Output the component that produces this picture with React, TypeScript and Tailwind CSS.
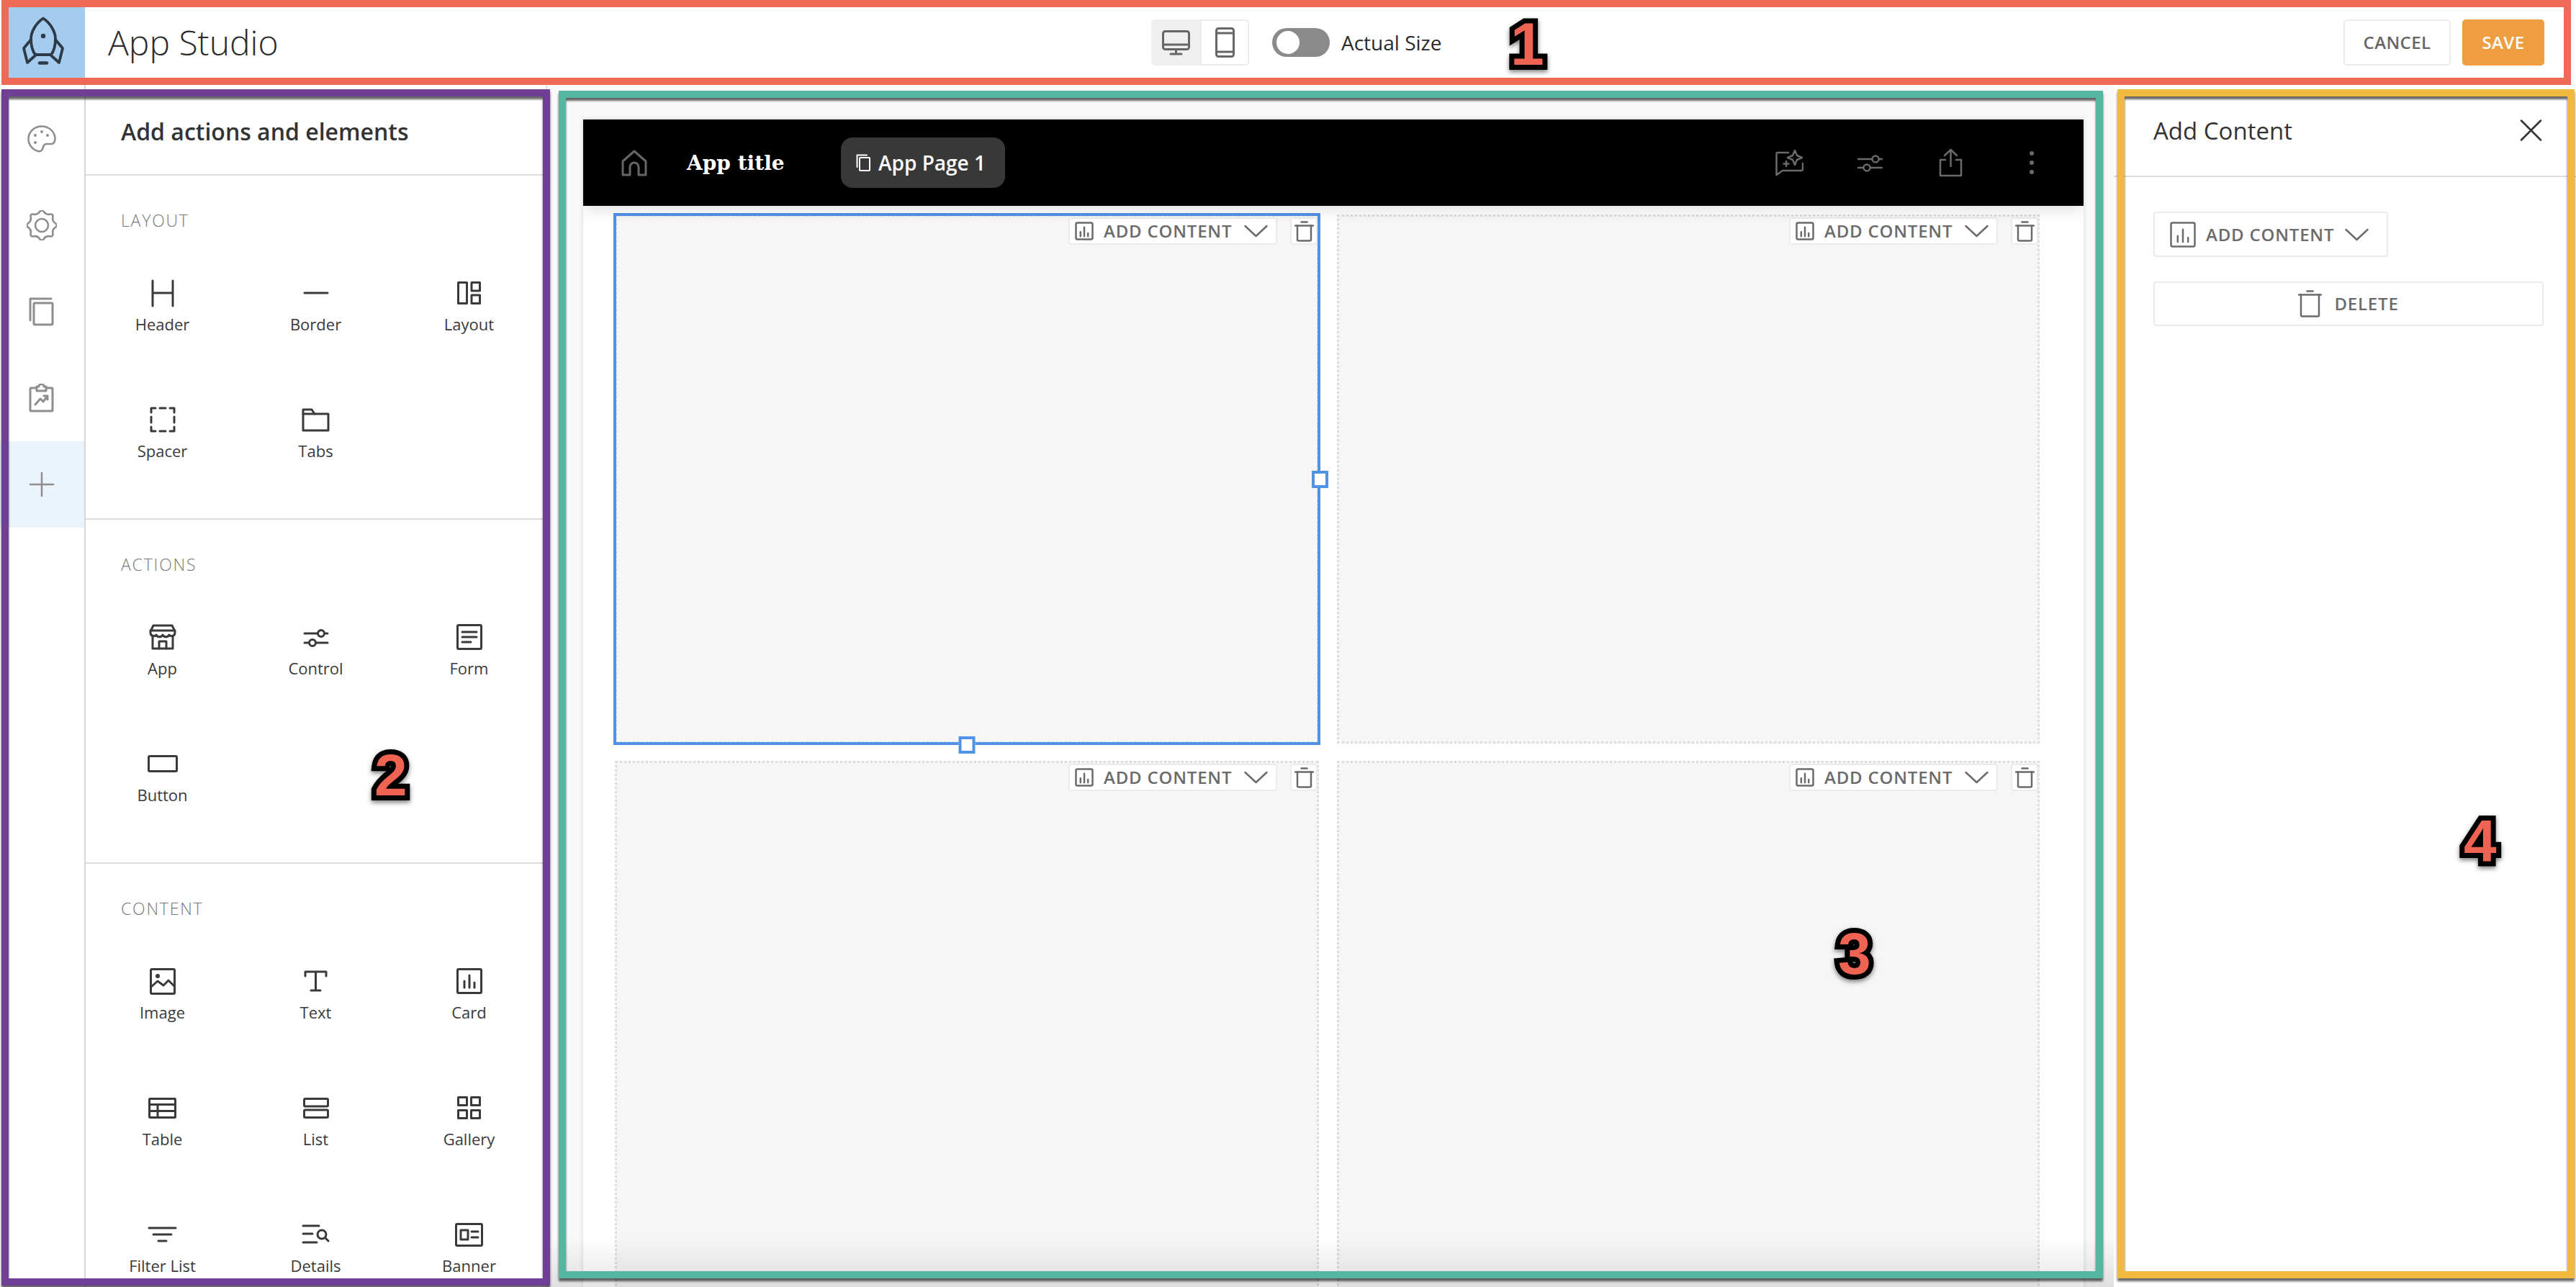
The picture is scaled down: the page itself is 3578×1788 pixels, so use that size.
import React from "react";

const Ico = ({ w, h, sw = 3, children, className = "" }: { w: number; h: number; sw?: number; children: React.ReactNode; className?: string }) => (
  <svg width={w} height={h} viewBox={`0 0 ${w} ${h}`} fill="none" stroke="currentColor" strokeWidth={sw} strokeLinecap="round" strokeLinejoin="round" className={`shrink-0 ${className}`}>
    {children}
  </svg>
);

const Rocket = () => (
  <Ico w={60} h={70} sw={3.8} className="text-[#2e3a46]">
    <path d="M30 3.5C20 10 13 22 13 32C13 42 16 50 19 54H41C44 50 47 42 47 32C47 22 40 10 30 3.5Z" />
    <path d="M13 33L3 45L8 65L19 55" />
    <path d="M47 33L57 45L52 65L41 55" />
    <circle cx="30" cy="28" r="3.2" fill="currentColor" stroke="none" />
    <path d="M25 65.5H35" strokeWidth={4.5} />
  </Ico>
);

// eight lobes, smoothed through the midpoints of an alternating outer/inner ring
const gearPath = (() => {
  const pts = Array.from({ length: 16 }, (_, i) => {
    const a = (i * Math.PI) / 8 - Math.PI / 2;
    const r = i % 2 === 0 ? 23 : 15.5;
    return [21 + r * Math.cos(a), 21 + r * Math.sin(a)];
  });
  const mid = (a: number[], b: number[]) => [(a[0] + b[0]) / 2, (a[1] + b[1]) / 2];
  const start = mid(pts[15], pts[0]);
  let d = `M${start[0].toFixed(2)} ${start[1].toFixed(2)}`;
  pts.forEach((p, i) => {
    const m = mid(p, pts[(i + 1) % 16]);
    d += `Q${p[0].toFixed(2)} ${p[1].toFixed(2)} ${m[0].toFixed(2)} ${m[1].toFixed(2)}`;
  });
  return d + "Z";
})();

const ChartBox = ({ s = 26 }: { s?: number }) => (
  <Ico w={s} h={s} sw={2.5}>
    <rect x="1.5" y="1.5" width={s - 3} height={s - 3} rx="2" />
    <path d={`M${s * 0.3} ${s * 0.55}V${s * 0.78}M${s * 0.5} ${s * 0.3}V${s * 0.78}M${s * 0.7} ${s * 0.62}V${s * 0.78}`} />
  </Ico>
);

const Chevron = () => (
  <Ico w={33} h={18} sw={2.5}>
    <path d="M1.5 2L16.5 16L31.5 2" />
  </Ico>
);

const Trash = ({ w = 27, h = 29 }: { w?: number; h?: number }) => (
  <Ico w={w} h={h} sw={2.5}>
    <path d={`M${w / 2 - 4} 1.5H${w / 2 + 4}`} />
    <path d={`M1 6.5H${w - 1}`} />
    <path d={`M4 6.5V${h - 3}Q4 ${h - 1.5} 6 ${h - 1.5}H${w - 6}Q${w - 4} ${h - 1.5} ${w - 4} ${h - 3}V6.5`} />
  </Ico>
);

const icons: Record<string, React.ReactNode> = {
  Header: (
    <Ico w={32} h={39}>
      <path d="M2 2V37M30 2V37M2 19H30" />
    </Ico>
  ),
  Border: (
    <Ico w={36} h={4}>
      <path d="M2 2H34" />
    </Ico>
  ),
  Layout: (
    <Ico w={33} h={32}>
      <rect x="1.5" y="1.5" width="12" height="29" />
      <rect x="20" y="1.5" width="11.5" height="11.5" />
      <rect x="20" y="19" width="11.5" height="11.5" />
    </Ico>
  ),
  Spacer: (
    <Ico w={36} h={36}>
      <path d="M2 8V2H8M14 2H22M28 2H34V8M34 14V22M34 28V34H28M22 34H14M8 34H2V28M2 22V14" />
    </Ico>
  ),
  Tabs: (
    <Ico w={39} h={33}>
      <path d="M2 2H14L18 8H37V31H2Z" />
      <path d="M2 8H18" />
    </Ico>
  ),
  App: (
    <Ico w={38} h={36}>
      <path d="M5 16V34H33V16" />
      <path d="M6 2H32L36 10V12A4.5 4.5 0 0 1 28 15A5 5 0 0 1 19 15A5 5 0 0 1 10 15A4.5 4.5 0 0 1 2 12V10Z" />
      <path d="M2 9H36" />
      <path d="M14 34V24H24V34" />
    </Ico>
  ),
  Control: (
    <Ico w={36} h={27}>
      <path d="M2 8H20M30 8H34M2 21H8M18 21H34" />
      <circle cx="25" cy="8" r="4.5" />
      <circle cx="13" cy="21" r="4.5" />
    </Ico>
  ),
  Form: (
    <Ico w={36} h={36}>
      <rect x="1.5" y="1.5" width="33" height="33" rx="1.5" />
      <path d="M8 11H28M8 18H28M8 25H20" />
    </Ico>
  ),
  Button: (
    <Ico w={42} h={24}>
      <rect x="1.5" y="1.5" width="39" height="21" rx="1.5" />
    </Ico>
  ),
  Image: (
    <Ico w={36} h={37}>
      <rect x="1.5" y="1.5" width="33" height="34" rx="1.5" />
      <circle cx="11" cy="11" r="1.5" />
      <path d="M2 26L11 18L19 24L26 17L34 25" />
    </Ico>
  ),
  Text: (
    <Ico w={33} h={30}>
      <path d="M2 8V2H31V8M16.5 2V28M10 28H23" />
    </Ico>
  ),
  Card: (
    <Ico w={36} h={36}>
      <rect x="1.5" y="1.5" width="33" height="33" rx="1.5" />
      <path d="M11 18V27M18 10V27M25 20V27" />
    </Ico>
  ),
  Table: (
    <Ico w={39} h={29}>
      <rect x="1.5" y="1.5" width="36" height="26" rx="1" />
      <path d="M2 9.5H37M2 18.5H37M13 9.5V27" />
    </Ico>
  ),
  List: (
    <Ico w={36} h={29}>
      <rect x="1.5" y="1.5" width="33" height="10.5" rx="1.5" />
      <rect x="1.5" y="17" width="33" height="10.5" rx="1.5" />
    </Ico>
  ),
  Gallery: (
    <Ico w={33} h={32}>
      <rect x="1.5" y="1.5" width="12" height="11" />
      <rect x="19.5" y="1.5" width="12" height="11" />
      <rect x="1.5" y="19.5" width="12" height="11" />
      <rect x="19.5" y="19.5" width="12" height="11" />
    </Ico>
  ),
  "Filter List": (
    <Ico w={41} h={22}>
      <path d="M2 2H39M8 11H33M15 20H26" />
    </Ico>
  ),
  Details: (
    <Ico w={39} h={28}>
      <path d="M2 2H24M2 13H15M2 25H21" />
      <circle cx="28" cy="14" r="6" />
      <path d="M32.5 18.5L37 23" />
    </Ico>
  ),
  Banner: (
    <Ico w={39} h={33}>
      <rect x="1.5" y="1.5" width="36" height="30" rx="1.5" />
      <rect x="8" y="10" width="10" height="13" />
      <path d="M23 12H32M23 20H32" />
    </Ico>
  ),
};

const sections = [
  { title: "LAYOUT", items: ["Header", "Border", "Layout", "Spacer", "Tabs"] },
  { title: "ACTIONS", items: ["App", "Control", "Form", "Button"] },
  { title: "CONTENT", items: ["Image", "Text", "Card", "Table", "List", "Gallery", "Filter List", "Details", "Banner"] },
];

const Section = ({ title, items }: { title: string; items: string[] }) => (
  <div className="h-[478px] shrink-0 border-b-2 border-[#dcdcdc] last:h-auto last:border-b-0">
    <div className="pl-[49px] pt-[47px] text-[23px] leading-[30px] tracking-[1.8px] font-light text-[#777]">{title}</div>
    <div className="mt-[62px] grid grid-cols-3 auto-rows-[176px]">
      {items.map((item) => (
        <div key={item} className="flex flex-col items-center text-[#3a3a3a]">
          <div className="flex h-[48px] w-[48px] items-center justify-center">{icons[item]}</div>
          <span className="mt-[4px] text-[22px] leading-[30px]">{item}</span>
        </div>
      ))}
    </div>
  </div>
);

const Rail = () => (
  <div className="flex w-[119px] shrink-0 flex-col border-r-2 border-[#d8d8d8] pt-[15px] text-[#8e8e8e]">
    <div className="flex h-[120px] items-center justify-center pr-[2px]">
      <Ico w={40} h={38} sw={2.6}>
        <path d="M20 1.5C30 1.5 38 9 38.5 18C38.5 23 37 26 33 26H27C24 26 22.5 28 22 30C21.5 34 19 37 15 36C7 34 1.5 27 1.5 19C1.5 9 10 1.5 20 1.5Z" />
        <g fill="currentColor" stroke="none">
          <circle cx="11" cy="14" r="2" />
          <circle cx="20" cy="9" r="2" />
          <circle cx="28" cy="14" r="2" />
          <circle cx="11" cy="24" r="2" />
        </g>
      </Ico>
    </div>
    <div className="flex h-[120px] items-center justify-center pr-[2px]">
      <Ico w={42} h={42} sw={2.6}>
        <path d={gearPath} />
        <circle cx="21" cy="21" r="9" />
      </Ico>
    </div>
    <div className="flex h-[120px] items-center justify-center pr-[2px]">
      <Ico w={35} h={40}>
        <path d="M2 32V2H31" />
        <rect x="7" y="8" width="26" height="30" rx="1.5" />
      </Ico>
    </div>
    <div className="flex h-[120px] items-center justify-center pr-[2px]">
      <Ico w={35} h={40}>
        <path d="M11 6H3Q2 6 2 7V37Q2 38 3 38H32Q33 38 33 37V7Q33 6 32 6H24" />
        <path d="M11 10V4H14A3.5 3.5 0 0 1 21 4H24V10Z" />
        <path d="M9 29L16 21L20 25L26 17M21 17H26V22" />
      </Ico>
    </div>
    <div className="flex h-[120px] items-center justify-center bg-[#ebf3fb] pr-[2px]">
      <Ico w={36} h={36} sw={2.5}>
        <path d="M18 2V34M2 18H34" />
      </Ico>
    </div>
  </div>
);

const Cell = ({ selected = false }: { selected?: boolean }) => (
  <div className="relative h-[735px] border-[3px] border-dotted border-[#dcdcdc] bg-[#f6f6f6]">
    {selected && (
      <>
        <div className="absolute -inset-[5px] border-4 border-[#4f92e6]" />
        <div className="absolute right-[-16px] top-1/2 h-[24px] w-[23px] -translate-y-1/2 border-4 border-[#4f92e6] bg-white" />
        <div className="absolute bottom-[-17px] left-1/2 h-[24px] w-[23px] -translate-x-1/2 border-4 border-[#4f92e6] bg-white" />
      </>
    )}
    <div className="absolute right-[-1px] top-[1px] flex items-start gap-[18px] text-[#6b6b6b]">
      <div className="flex h-[38px] w-[290px] items-center rounded-[4px] border-2 border-[#ebebeb] bg-white pl-[7px]">
        <ChartBox />
        <span className="ml-[14px] text-[24px] font-semibold leading-none tracking-[0.8px]">ADD CONTENT</span>
        <span className="ml-[17px]">
          <Chevron />
        </span>
      </div>
      <div className="flex h-[38px] w-[38px] items-center justify-center rounded-[4px] border-2 border-[#ebebeb] bg-white">
        <Trash />
      </div>
    </div>
  </div>
);

const Num = ({ className, children }: { className: string; children: string }) => (
  <span
    className={`absolute font-['Liberation_Sans',sans-serif] font-bold leading-none text-[#ee6352] [-webkit-text-stroke:14px_#000] [paint-order:stroke_fill] drop-shadow-[0_3px_3px_rgba(0,0,0,0.5)] ${className}`}
  >
    {children}
  </span>
);

const App = () => {
  return (
    <div className="relative flex h-[1788px] w-[3578px] flex-col overflow-hidden bg-white font-['Open_Sans',sans-serif]">
      <header className="flex h-[118px] shrink-0 items-center pb-[10px] pl-[12px] pr-[44px] pt-[10px]">
        <div className="flex h-[98px] w-[106px] items-center justify-center bg-[#a3ccee] pb-[4px] pr-[10px]">
          <Rocket />
        </div>
        <h1 className="ml-[32px] w-[1449px] text-[48px] font-light leading-none text-[#2b2b2b]">App Studio</h1>
        <div className="flex h-[64px] w-[136px] text-[#666]">
          <div className="flex w-[68px] items-center justify-center rounded-l-[5px] bg-[#efefef]">
            <Ico w={39} h={35}>
              <rect x="1.5" y="1.5" width="36" height="25" rx="3" />
              <path d="M2 20H37M19.5 27V33M12 33H27" />
            </Ico>
          </div>
          <div className="flex w-[68px] items-center justify-center rounded-r-[5px] border-2 border-[#ececec]">
            <Ico w={27} h={42}>
              <rect x="1.5" y="1.5" width="24" height="39" rx="3" />
              <path d="M2 8H25M2 34H25" />
            </Ico>
          </div>
        </div>
        <div className="ml-[32px] flex h-[40px] w-[80px] items-center rounded-full bg-[#8a8a8a] pl-[6px]">
          <div className="h-[32px] w-[32px] rounded-full bg-white" />
        </div>
        <span className="ml-[16px] text-[28px] leading-none text-[#2b2b2b]">Actual Size</span>
        <div className="ml-auto flex h-[64px] gap-[16px] text-[24px] font-semibold tracking-[0.4px]">
          <button className="w-[149px] rounded-[5px] border-2 border-[#ececec] text-[#666]">CANCEL</button>
          <button className="w-[114px] rounded-[5px] bg-[#ee9d41] text-white">SAVE</button>
        </div>
      </header>

      <main className="flex min-h-0 flex-1">
        <aside className="flex w-[760px] shrink-0 border-r-2 border-[#e2e2e2]">
          <Rail />
          <div className="flex min-w-0 flex-1 flex-col overflow-hidden">
            <div className="flex h-[126px] shrink-0 items-center border-b-2 border-[#dcdcdc] pl-[49px] pt-[6px] text-[32px] font-semibold leading-none text-[#333]">
              Add actions and elements
            </div>
            {sections.map((s) => (
              <Section key={s.title} title={s.title} items={s.items} />
            ))}
          </div>
        </aside>

        <section className="relative flex min-w-0 flex-1 flex-col overflow-hidden bg-[#f9f9f9] pl-[50px] pr-[42px] pt-[48px]">
          <div className="relative flex-1 overflow-hidden bg-white shadow-[0_0_6px_rgba(0,0,0,0.15)]">
            <div className="relative z-10 flex h-[120px] items-center bg-black pl-[53px] pr-[69px] shadow-[0_6px_20px_rgba(0,0,0,0.12)]">
              <Ico w={36} h={37} className="text-[#666]">
                <path d="M2 16L18 2L34 16V35H24V24A6 6 0 0 0 12 24V35H2Z" />
              </Ico>
              <span className="ml-[55px] w-[133px] whitespace-nowrap pt-[2px] font-['DejaVu_Serif',serif] text-[28px] font-bold leading-none text-white">App title</span>
              <div className="ml-[81px] flex h-[70px] w-[228px] items-center rounded-[16px] bg-[#383838] pl-[21px]">
                <Ico w={20} h={24} sw={2} className="text-white">
                  <path d="M1.5 18V1.5H15" />
                  <rect x="5" y="5" width="14" height="18" rx="1" />
                </Ico>
                <span className="ml-[11px] text-[28px] font-semibold leading-none text-white">App Page 1</span>
              </div>
              <div className="ml-auto flex items-center text-[#6a6a6a]">
                <Ico w={39} h={38} sw={2.5}>
                  <path d="M18 5H3Q1.5 5 1.5 6.5V36L10 30H36Q38 30 38 28V20" />
                  <path d="M27 2L30 9L37 12L30 15L27 22L24 15L17 12L24 9Z" />
                  <path d="M15 17V24M11.5 20.5H18.5" />
                </Ico>
                <Ico w={35} h={26} sw={2.5} className="ml-[75px]">
                  <path d="M1 8H20M30 8H34M1 20H8M18 20H34" />
                  <circle cx="25" cy="8" r="4.5" />
                  <circle cx="13" cy="20" r="4.5" />
                </Ico>
                <Ico w={33} h={40} sw={2.5} className="ml-[78px]">
                  <path d="M9 16H2V38H31V16H24" />
                  <path d="M16.5 25V2M8 10L16.5 2L25 10" />
                </Ico>
                <div className="ml-[93px] flex flex-col gap-[7px]">
                  <span className="h-[6px] w-[6px] rounded-full bg-[#6a6a6a]" />
                  <span className="h-[6px] w-[6px] rounded-full bg-[#6a6a6a]" />
                  <span className="h-[6px] w-[6px] rounded-full bg-[#6a6a6a]" />
                </div>
              </div>
            </div>
            <div className="grid grid-cols-[978px_976px] gap-x-[25px] gap-y-[24px] pl-[44px] pt-[12px]">
              <Cell selected />
              <Cell />
              <Cell />
              <Cell />
            </div>
          </div>
          <div className="absolute bottom-0 left-0 right-0 h-[70px] bg-gradient-to-t from-black/10 to-transparent" />
        </section>

        <aside className="w-[642px] shrink-0 bg-white pl-[55px] shadow-[-1px_0_3px_rgba(0,0,0,0.05)]">
          <div className="-ml-[55px] flex h-[128px] items-center justify-between border-b-2 border-[#dcdcdc] pl-[55px] pr-[47px] text-[#333]">
            <span className="text-[33px] leading-none">Add Content</span>
            <Ico w={31} h={30} sw={2.5}>
              <path d="M2 1.5L29 28.5M29 1.5L2 28.5" />
            </Ico>
          </div>
          <div className="mt-[48px] flex h-[63px] w-[326px] items-center rounded-[4px] border-2 border-[#ebebeb] pl-[21px] text-[#6b6b6b]">
            <ChartBox s={36} />
            <span className="ml-[14px] text-[24px] font-semibold leading-none tracking-[0.8px]">ADD CONTENT</span>
            <span className="ml-[15px]">
              <Chevron />
            </span>
          </div>
          <div className="mt-[34px] flex h-[62px] w-[542px] items-center justify-center gap-[17px] rounded-[4px] border-2 border-[#ebebeb] text-[#6b6b6b]">
            <Trash w={33} h={38} />
            <span className="text-[24px] font-semibold leading-none tracking-[0.8px]">DELETE</span>
          </div>
        </aside>
      </main>

      <div className="pointer-events-none absolute left-[2px] top-0 h-[118px] w-[3569px] border-[10px] border-[#ee6a56]" />
      <div className="pointer-events-none absolute left-[2px] top-[124px] h-[1662px] w-[762px] border-[10px] border-[#6f3f96] shadow-[0_4px_3px_rgba(0,0,0,0.6),inset_0_4px_3px_rgba(0,0,0,0.6)]" />
      <div className="pointer-events-none absolute left-[776px] top-[126px] h-[1650px] w-[2145px] border-[10px] border-[#55b7a0] shadow-[0_4px_3px_rgba(0,0,0,0.6),inset_0_4px_3px_rgba(0,0,0,0.6)]" />
      <div className="pointer-events-none absolute left-[2941px] top-[124px] h-[1652px] w-[635px] border-[10px] border-[#f2b93f] shadow-[0_4px_3px_rgba(0,0,0,0.6),inset_0_4px_3px_rgba(0,0,0,0.6)]" />

      <Num className="left-[2098px] top-[19px] text-[84px]">1</Num>
      <Num className="left-[520px] top-[1036px] text-[82px]">2</Num>
      <Num className="left-[2553px] top-[1284px] text-[82px]">3</Num>
      <Num className="left-[3422px] top-[1127px] text-[82px]">4</Num>
    </div>
  );
};

export default App;
